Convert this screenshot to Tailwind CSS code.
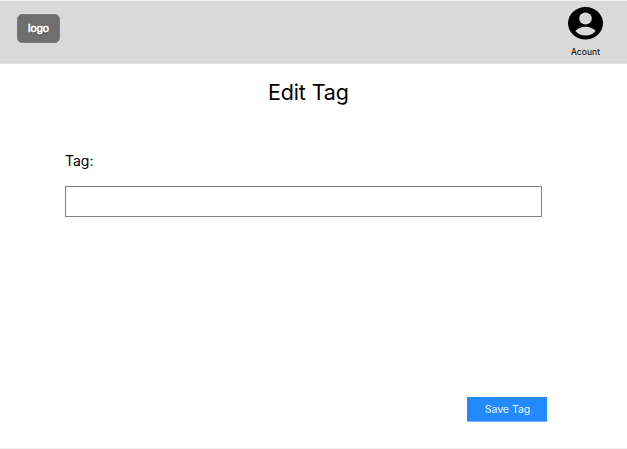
<!DOCTYPE html>
<html lang="en">
<head>
<meta charset="utf-8">
<title>Edit Tag</title>
<script src="https://cdn.jsdelivr.net/npm/@tailwindcss/browser@4"></script>
</head>
<body class="bg-white text-black font-['Inter',sans-serif] w-[627px] h-[449px] overflow-hidden flex flex-col border-t border-b border-t-[#f2f2f2] border-b-[#f0f0f0]">
  <header class="h-[63px] shrink-0 bg-[#d9d9d9] flex items-start justify-between pl-[17px] pr-6 border-b border-[#e2e2e2]">
    <a class="mt-[13px] w-[43px] h-[29px] rounded-[5px] bg-[#6f6f6f] border border-[#7c7c7c] text-white font-['Liberation_Sans',sans-serif] text-[11px] leading-[27px] text-center [-webkit-text-stroke:0.6px_white] [text-shadow:0_1px_2px_rgba(0,0,0,0.4)]">logo</a>
    <div class="mt-1.5 w-[35px] flex flex-col items-center">
      <svg class="w-[35px] h-[33px]" viewBox="0 0 35 33" preserveAspectRatio="none">
        <ellipse cx="17.5" cy="16.2" rx="17.5" ry="16.2" fill="#000"/>
        <ellipse cx="17.5" cy="11.6" rx="6.3" ry="6" fill="#d9d9d9"/>
        <path d="M7.4 24C9.4 21.3 13.8 19.7 17.5 19.7S25.6 21.3 27.6 24C25.1 27 21.5 28.6 17.5 28.6S9.9 27 7.4 24Z" fill="#d9d9d9"/>
      </svg>
      <span class="mt-[6px] text-[8.5px] leading-3 tracking-[0.1px] whitespace-nowrap">Acount</span>
    </div>
  </header>
  <main class="flex-1 flex flex-col">
    <h1 class="mt-[14px] ml-[268px] text-[21.5px] leading-7 tracking-[-0.15px]">Edit Tag</h1>
    <label class="mt-[45px] ml-[65px] text-[14px] leading-5">Tag:</label>
    <input class="mt-[15px] ml-[65px] w-[477px] h-[31px] border border-[#818181] outline-none">
    <button class="mt-[180px] ml-[467px] w-[80px] h-[25px] bg-[#2289ff] text-white/90 text-[10.5px] leading-[22px] pt-[2px] pl-px border-b border-[#78b7ff]">Save Tag</button>
  </main>
</body>
</html>
